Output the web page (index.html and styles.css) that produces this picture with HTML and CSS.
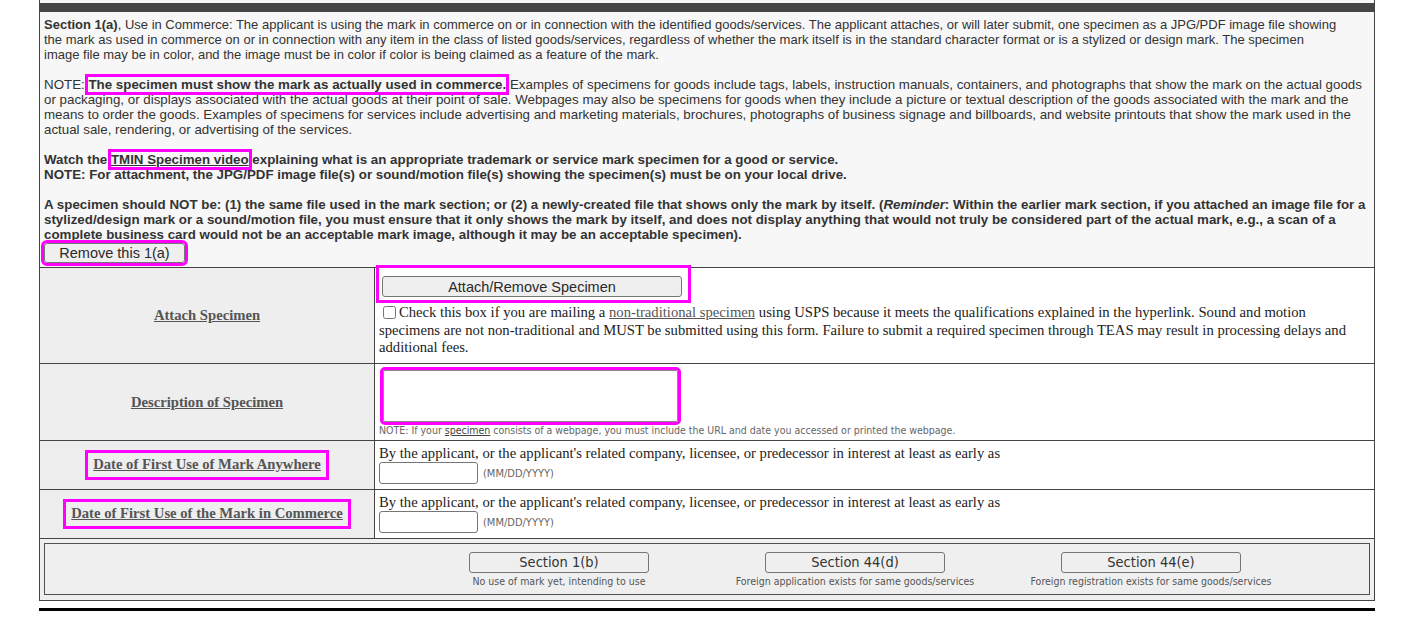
FILE: index.html
```html
<!DOCTYPE html>
<html>
<head>
<meta charset="utf-8">
<title>Section 1(a) Specimen</title>
<link rel="stylesheet" href="styles.css">
</head>
<body>
<div class="page">
  <div class="intro">
    <div class="cap"></div>
    <div class="intro-body">
      <p class="lead"><b>Section 1(a)</b>, Use in Commerce: The applicant is using the mark in commerce on or in connection with the identified goods/services. The applicant attaches, or will later submit, one specimen as a JPG/PDF image file showing<br>the mark as used in commerce on or in connection with any item in the class of listed goods/services, regardless of whether the mark itself is in the standard character format or is a stylized or design mark. The specimen<br>image file may be in color, and the image must be in color if color is being claimed as a feature of the mark.</p>
      <p>NOTE: <b class="hl">The specimen must show the mark as actually used in commerce.</b> Examples of specimens for goods include tags, labels, instruction manuals, containers, and photographs that show the mark on the actual goods<br>or packaging, or displays associated with the actual goods at their point of sale. Webpages may also be specimens for goods when they include a picture or textual description of the goods associated with the mark and the<br>means to order the goods. Examples of specimens for services include advertising and marketing materials, brochures, photographs of business signage and billboards, and website printouts that show the mark used in the<br>actual sale, rendering, or advertising of the services.</p>
      <p class="strong">Watch the <a class="link hl" href="#">TMIN Specimen video</a> explaining what is an appropriate trademark or service mark specimen for a good or service.<br>NOTE: For attachment, the JPG/PDF image file(s) or sound/motion file(s) showing the specimen(s) must be on your local drive.</p>
      <p class="strong">A specimen should NOT be: (1) the same file used in the mark section; or (2) a newly-created file that shows only the mark by itself. (<i>Reminder</i>: Within the earlier mark section, if you attached an image file for a<br>stylized/design mark or a sound/motion file, you must ensure that it only shows the mark by itself, and does not display anything that would not truly be considered part of the actual mark, e.g., a scan of a<br>complete business card would not be an acceptable mark image, although it may be an acceptable specimen).</p>
      <button class="btn remove hl" type="button">Remove this 1(a)</button>
    </div>
  </div>
  <table class="form">
    <tr>
      <td class="label"><a class="lbl" href="#">Attach Specimen</a></td>
      <td class="field attach-cell">
        <div class="attach hl"><button class="btn attach-btn" type="button">Attach/Remove Specimen</button></div>
        <p class="mail"><input class="check" type="checkbox">Check this box if you are mailing a <a class="serif-link" href="#">non-traditional specimen</a> using USPS because it meets the qualifications explained in the hyperlink. Sound and motion<br>specimens are not non-traditional and MUST be submitted using this form. Failure to submit a required specimen through TEAS may result in processing delays and<br>additional fees.</p>
      </td>
    </tr>
    <tr>
      <td class="label"><a class="lbl" href="#">Description of Specimen</a></td>
      <td class="field desc-cell">
        <textarea class="desc hl"></textarea>
        <div class="note">NOTE: If your <a class="note-link" href="#">specimen</a> consists of a webpage, you must include the URL and date you accessed or printed the webpage.</div>
      </td>
    </tr>
    <tr>
      <td class="label"><span class="hl boxed"><a class="lbl" href="#">Date of First Use of Mark Anywhere</a></span></td>
      <td class="field date-cell">
        <div class="by">By the applicant, or the applicant's related company, licensee, or predecessor in interest at least as early as</div>
        <div class="date-row"><input class="date" type="text"><span class="fmt">(MM/DD/YYYY)</span></div>
      </td>
    </tr>
    <tr>
      <td class="label"><span class="hl boxed"><a class="lbl" href="#">Date of First Use of the Mark in Commerce</a></span></td>
      <td class="field date-cell">
        <div class="by">By the applicant, or the applicant's related company, licensee, or predecessor in interest at least as early as</div>
        <div class="date-row"><input class="date" type="text"><span class="fmt">(MM/DD/YYYY)</span></div>
      </td>
    </tr>
    <tr>
      <td class="switch-cell" colspan="2">
        <div class="switch-box">
          <div class="switch">
            <button class="btn sec" type="button">Section 1(b)</button>
            <div class="sec-desc">No use of mark yet, intending to use</div>
          </div>
          <div class="switch">
            <button class="btn sec" type="button">Section 44(d)</button>
            <div class="sec-desc">Foreign application exists for same goods/services</div>
          </div>
          <div class="switch">
            <button class="btn sec" type="button">Section 44(e)</button>
            <div class="sec-desc">Foreign registration exists for same goods/services</div>
          </div>
        </div>
      </td>
    </tr>
  </table>
</div>
<div class="rule"></div>
</body>
</html>
```

FILE: styles.css
```css
html, body {
  margin: 0;
  padding: 0;
  background: #ffffff;
}

.page {
  margin-left: 39px;
  width: 1336px;
}

.intro {
  border-left: 1px solid #444;
  border-right: 1px solid #444;
  background: #f7f7f7;
  padding-top: 3px;
}

.cap {
  height: 9px;
  background: #464646;
}

.intro-body {
  padding: 5px 4px 4px 4px;
  font-family: "Liberation Sans", Arial, sans-serif;
  font-size: 13.33px;
  line-height: 15px;
  color: #333;
  white-space: nowrap;
}

.intro-body p {
  margin: 0 0 15px 0;
}

.intro-body p.lead {
  font-size: 13px;
}

.intro-body p:last-of-type {
  margin-bottom: 0;
}

.strong {
  font-weight: bold;
}

.link {
  color: #333;
  text-decoration: underline;
}

.hl {
  outline: 3px solid #ff00ff;
}

.btn {
  font-family: "Liberation Sans", Arial, sans-serif;
  font-size: 14.5px;
  color: #2a2a2a;
  background: #efefef;
  border: 1px solid #767676;
  border-radius: 3px;
  padding: 0;
  margin: 0;
}

.remove {
  display: block;
  width: 141px;
  height: 20px;
  margin-top: 1px;
}

.form {
  width: 1336px;
  border-collapse: separate;
  border-spacing: 0;
  border: 1px solid #444;
  table-layout: fixed;
}

.form td {
  padding: 0;
}

.form tr + tr td {
  border-top: 1px solid #444;
}

.label {
  width: 334px;
  border-right: 1px solid #444;
  background: #eeeeee;
  text-align: center;
  vertical-align: middle;
  font-family: "Liberation Serif", "Times New Roman", serif;
  font-size: 14.67px;
  line-height: 16px;
}

.lbl {
  color: #555;
  font-weight: bold;
  text-decoration: underline;
}

.boxed {
  display: inline-block;
  padding: 3px 5px 5px 5px;
}

.field {
  background: #ffffff;
  vertical-align: top;
  font-family: "Liberation Serif", "Times New Roman", serif;
  font-size: 14.67px;
  line-height: 16px;
  color: #222;
}

.attach-cell {
  padding: 0 4px 6px 4px !important;
}

.attach {
  display: block;
  width: 309px;
  box-sizing: border-box;
  padding: 8px 6px 3px 3px;
}

.attach-btn {
  display: block;
  width: 300px;
  height: 21px;
}

.mail {
  margin: 3px 0 0 0;
  line-height: 17.5px;
  white-space: nowrap;
}

.check {
  width: 13px;
  height: 13px;
  margin: 3px 3px 0 4px;
  vertical-align: -2px;
}

.serif-link {
  color: #555;
  text-decoration: underline;
}

.desc-cell {
  padding: 6px 4px 4px 4px !important;
}

.desc {
  display: block;
  box-sizing: border-box;
  width: 295px;
  height: 52px;
  margin: 0 0 0 4px;
  border: 1px solid #8a8a8a;
  border-radius: 2px;
  resize: none;
  background: #fff;
}

.note {
  margin-top: 2px;
  font-family: "DejaVu Sans", Verdana, sans-serif;
  font-stretch: condensed;
  font-size: 10.5px;
  line-height: 12px;
  color: #666;
  white-space: nowrap;
}

.note-link {
  color: #444;
  text-decoration: underline;
}

.date-cell {
  padding: 4px 4px 5px 4px !important;
}

.date-row {
  display: flex;
  align-items: center;
  gap: 5px;
  margin-top: 1px;
}

.date {
  box-sizing: border-box;
  width: 99px;
  height: 22px;
  margin: 0;
  border: 1px solid #767676;
  border-radius: 3px;
  background: #fff;
}

.fmt {
  font-family: "DejaVu Sans", Verdana, sans-serif;
  font-stretch: condensed;
  font-size: 11px;
  color: #666;
  padding-top: 2px;
}

.switch-cell {
  background: #efefef;
  padding: 4px 4px 5px 4px !important;
}

.switch-box {
  border: 1px solid #505050;
  background: #efefef;
  padding: 8px 0 7px 366px;
  display: grid;
  grid-template-columns: repeat(3, 296px);
}

.switch {
  display: flex;
  flex-direction: column;
  align-items: center;
}

.sec {
  width: 180px;
  height: 21px;
  font-family: "DejaVu Sans", Verdana, sans-serif;
  font-stretch: condensed;
  font-size: 14.5px;
  color: #333;
}

.sec-desc {
  margin-top: 2px;
  font-family: "DejaVu Sans", Verdana, sans-serif;
  font-stretch: condensed;
  font-size: 10.5px;
  line-height: 12px;
  color: #555;
  white-space: nowrap;
}

.rule {
  margin: 7px 0 0 39px;
  width: 1336px;
  height: 3px;
  background: #000;
}
```
